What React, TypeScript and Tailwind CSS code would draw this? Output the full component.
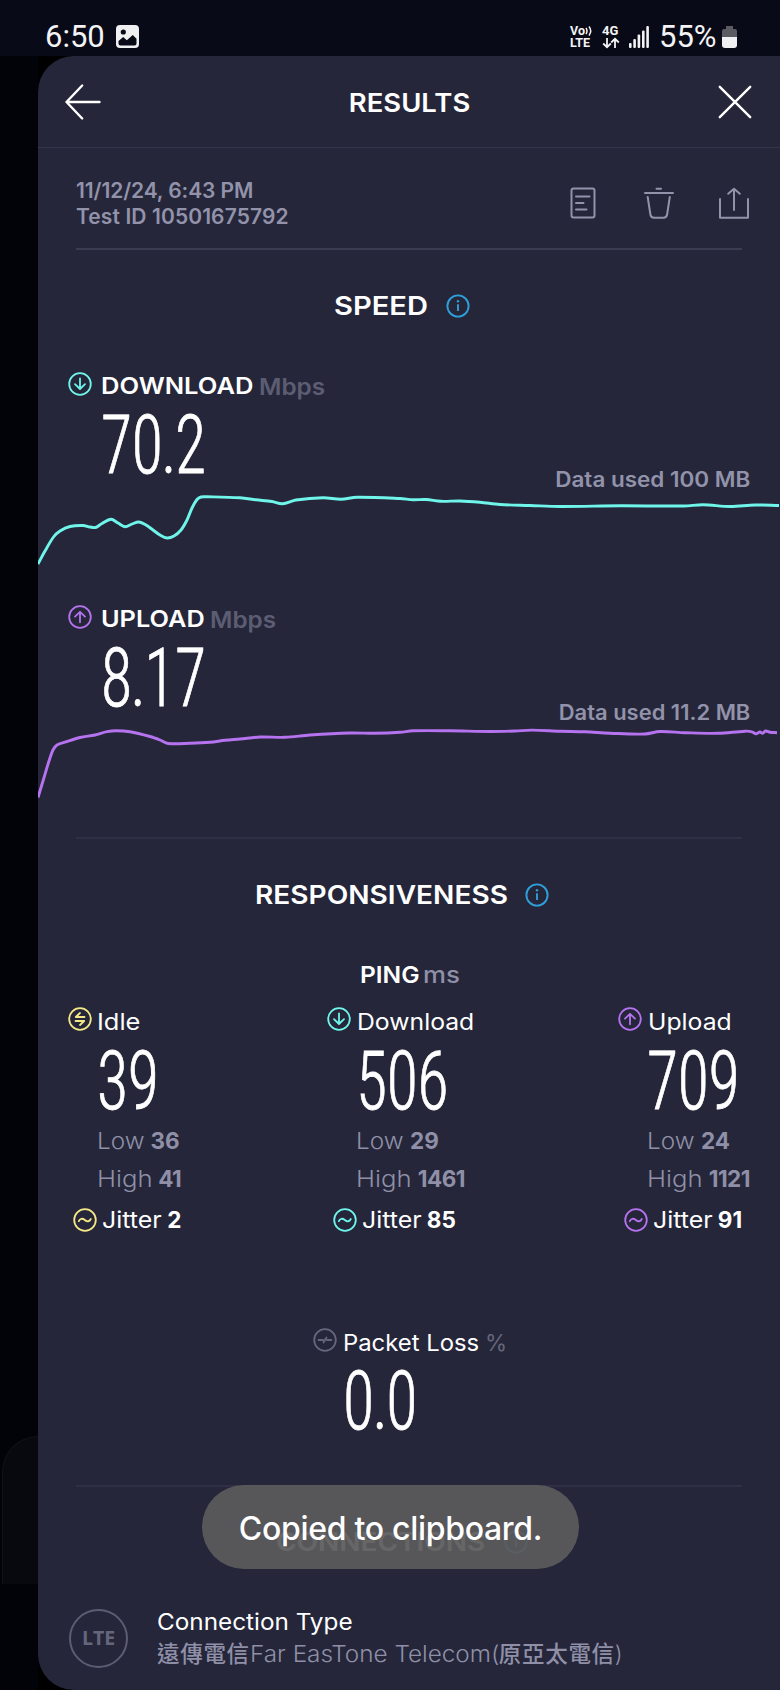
import type { ReactNode } from "react";

type Point = [number, number];
type Direction = "up" | "down";

type PingColumn = {
  label: ReactNode;
  value: string;
  low: string;
  high: string;
  jitter: string;
  color: string;
  icon: ReactNode;
};

const CYAN = "#6ff5ea";
const PURPLE = "#b673f0";
const YELLOW = "#f4e886";

const DOWNLOAD_POINTS: Point[] = [
  [38, 564], [45, 551], [53.5, 537], [60, 531], [70, 526.5], [83, 525.5], [90, 527], [95.5, 527.5],
  [102, 523.5], [111, 519.3], [118, 523], [125, 526.7], [132, 524], [139, 522], [146, 525], [153, 530],
  [160, 535], [167, 538], [174, 536], [181, 530], [187, 520], [192, 508], [197, 499.5], [201, 497],
  [207, 496.8], [240, 497.8], [256, 499.8], [272, 501.5], [282.5, 503.7], [296, 500], [323, 497.7],
  [341, 499.2], [357, 497.3], [400, 498.5], [413, 499.7], [426, 499.5], [441, 501.3], [460, 501],
  [480, 502.3], [500, 504.5], [530, 505.5], [560, 506.5], [620, 505.8], [684, 506], [703, 504.7],
  [730, 506.5], [755, 505], [779, 505.5],
];

const UPLOAD_POINTS: Point[] = [
  [38, 797.5], [43, 781], [49, 761], [53, 750], [57, 745], [66, 741.8], [80, 737.5], [95, 735],
  [107, 731.7], [116, 730.7], [130, 731.7], [150, 736.5], [160, 740], [168, 743.5], [190, 743.3],
  [210, 742.3], [225, 740.3], [240, 739], [260, 737], [285, 737.3], [310, 735], [350, 733],
  [375, 733.3], [400, 732.3], [413, 730.8], [450, 730.8], [490, 731.5], [515, 731], [532, 730.1],
  [560, 731.2], [585, 731.8], [610, 733.2], [645, 734], [660, 731.5], [685, 732.7], [718, 733.3],
  [745, 731.2], [752, 731.8], [756, 733.8], [760, 731.9], [762.5, 733.3], [765.5, 731],
  [770, 732.2], [777, 732.7],
];

// Catmull-Rom to bezier
function smoothPath(pts: Point[]): string {
  let d = `M${pts[0][0]} ${pts[0][1]}`;
  for (let i = 0; i < pts.length - 1; i++) {
    const p0 = pts[i - 1] ?? pts[i];
    const p1 = pts[i];
    const p2 = pts[i + 1];
    const p3 = pts[i + 2] ?? p2;
    const dx = (p2[0] - p1[0]) / 3;
    const m1 = (p2[1] - p0[1]) / (p2[0] - p0[0]);
    const m2 = (p3[1] - p1[1]) / (p3[0] - p1[0]);
    d += `C${p1[0] + dx} ${p1[1] + m1 * dx} ${p2[0] - dx} ${p2[1] - m2 * dx} ${p2[0]} ${p2[1]}`;
  }
  return d;
}

function CircleIcon({ color, children, className = "" }: { color: string; children: ReactNode; className?: string }) {
  return (
    <svg
      viewBox="0 0 24 24"
      className={`size-6 shrink-0 ${className}`}
      fill="none"
      stroke={color}
      strokeWidth="1.8"
      strokeLinecap="round"
      strokeLinejoin="round"
    >
      <circle cx="12" cy="12" r="10.8" />
      {children}
    </svg>
  );
}

function ArrowIcon({ dir, color, className }: { dir: Direction; color: string; className?: string }) {
  return (
    <CircleIcon color={color} className={className}>
      <path d={dir === "down" ? "M12 6.5v10.3M7 12.2l5 4.8 5-4.8" : "M12 17.3V7M7 11.6l5-4.8 5 4.8"} />
    </CircleIcon>
  );
}

function IdleIcon({ className }: { className?: string }) {
  return (
    <CircleIcon color={YELLOW} className={className}>
      <path d="M16.5 10H7.8l4.200-4M7.500 14h8.700l-4.200 4" />
    </CircleIcon>
  );
}

function JitterIcon({ color }: { color: string }) {
  return (
    <CircleIcon color={color}>
      <path d="M5.8 13.2c1.200-2.800 3.600-3.200 6-1.200s4.600 1.700 6-1" />
    </CircleIcon>
  );
}

function InfoIcon() {
  return (
    <svg viewBox="0 0 24 24" className="size-6 shrink-0" fill="none" stroke="#2f9fd9" strokeWidth="1.9">
      <circle cx="12" cy="12" r="10.6" />
      <path d="M12 10.2v6.8" />
      <circle cx="12" cy="7.3" r="1.2" fill="#2f9fd9" stroke="none" />
    </svg>
  );
}

// Widened text; the caller adds the margin that the scale takes up
function Wide({ children, className = "" }: { children: ReactNode; className?: string }) {
  return <span className={`inline-block origin-left whitespace-nowrap ${className}`}>{children}</span>;
}

function BigNumber({ children }: { children: string }) {
  const [whole, fraction] = children.split(".");
  return (
    <span className="inline-block origin-left scale-x-[0.78] font-['Roboto_Condensed','Roboto',sans-serif] text-[82px] leading-[86px] font-light tracking-[-0.5px] [-webkit-text-stroke:0.8px_#fff]">
      {whole}
      {fraction && <span className="-mx-[1.5px]">.</span>}
      {fraction}
    </span>
  );
}

function Divider({ className = "" }: { className?: string }) {
  return <div className={`mr-[38px] ml-[38px] h-0.5 shrink-0 ${className}`} />;
}

function StatusBar() {
  return (
    <header className="flex h-14 shrink-0 items-center bg-[#090a17] pt-[17px] pr-[43px] pl-[45px] font-['Roboto',sans-serif] text-[31px] leading-none font-[430] text-[#f3f3f5]">
      <span className="w-[60px]">6:50</span>
      <svg viewBox="0 0 23 23" className="ml-[11px] size-[23px]">
        <rect width="23" height="23" rx="4" fill="#f0f0f2" />
        <circle cx="7.3" cy="7" r="2.6" fill="#090a17" />
        <path d="M2.5 18.5V16l4.700-4 3.600 3.300L16.800 10l3.700 3.700v4.800a2 2 0 0 1-2 2h-14a2 2 0 0 1-2-2Z" fill="#090a17" />
      </svg>
      <div className="ml-auto flex items-center">
        <div className="flex w-[24px] flex-col text-[12.5px] leading-[12px] font-bold">
          <span className="flex">
            Vo
            <svg viewBox="0 0 8 12" className="h-3 w-2" fill="none" stroke="#f3f3f5" strokeWidth="1.5">
              <path d="M1 3q2 3 0 6M4 1.500q3.500 4.500 0 9" />
            </svg>
          </span>
          <span>LTE</span>
        </div>
        <div className="ml-[8px] flex w-[18px] flex-col text-[13px] leading-[12px] font-bold">
          <span>4G</span>
          <svg viewBox="0 0 18 12" className="h-3 w-[18px]" fill="none" stroke="#f3f3f5" strokeWidth="1.8">
            <path d="M5 1v9M1.200 6.500 5 10.200l3.800-3.700M13 11V2M9.200 5.500 13 1.800l3.800 3.700" />
          </svg>
        </div>
        <svg viewBox="0 0 20 22" className="ml-[9px] h-[22px] w-[20px]" fill="#f3f3f5">
          <rect x="0" y="17" width="2.6" height="5" rx="1" />
          <rect x="4.3" y="13" width="2.6" height="9" rx="1" />
          <rect x="8.6" y="8.5" width="2.6" height="13.5" rx="1" />
          <rect x="13" y="4.5" width="2.6" height="17.5" rx="1" />
          <rect x="17.3" y="0" width="2.6" height="22" rx="1" />
        </svg>
        <span className="ml-[10px] w-[58px]">55%</span>
        <svg viewBox="0 0 15 22" className="ml-[5px] h-[22px] w-[15px]">
          <path d="M4 0h7v3h2a2 2 0 0 1 2 2v6H0V5a2 2 0 0 1 2-2h2Z" fill="#5b5b64" />
          <path d="M0 11h15v8a3 3 0 0 1-3 3H3a3 3 0 0 1-3-3Z" fill="#f0f0f2" />
        </svg>
      </div>
    </header>
  );
}

function SectionTitle({ children, className = "" }: { children: ReactNode; className?: string }) {
  return (
    <div className={`flex h-[30px] shrink-0 items-center justify-center gap-[18px] pr-[14px] text-[26px] leading-[30px] font-semibold ${className}`}>
      {children}
      <InfoIcon />
    </div>
  );
}

function SpeedBlock({
  label, value, used, color, points, top,
}: {
  label: ReactNode;
  value: string;
  used: ReactNode;
  color: string;
  points: Point[];
  top: number;
}) {
  return (
    <div className="h-[233px] shrink-0">
      <div className="flex h-8 items-center pl-[29.5px] text-[23px] leading-[33px] font-semibold">
        <ArrowIcon dir={color === CYAN ? "down" : "up"} color={color} className="mr-[9px] mb-[5px]" />
        {label}
        <Wide className="ml-[6px] scale-x-[1.08] text-[22.5px] font-[580] text-[#5c5d73]">Mbps</Wide>
      </div>
      <div className="flex h-[92px] justify-between pr-[30px] pl-[63px]">
        <BigNumber>{value}</BigNumber>
        <div className="self-end text-[21px] leading-[29px] font-[580] text-[#9293aa]">{used}</div>
      </div>
      <svg viewBox={`38 ${top} 742 76`} className="h-[76px] w-[742px]" fill="none" stroke={color} strokeWidth="2.9">
        <path d={smoothPath(points)} />
      </svg>
    </div>
  );
}

function PingStats({ col }: { col: PingColumn }) {
  return (
    <div className="text-[22.5px]">
      <div className="flex h-8 items-center gap-[5.5px] leading-8">
        {col.icon}
        {col.label}
      </div>
      <div className="h-[84px] pl-[29px]">
        <BigNumber>{col.value}</BigNumber>
      </div>
      <div className="pl-[29px] leading-[37.5px] text-[#8f90a7]">
        <p>
          <Wide className="mr-[3.5px] scale-x-[1.08] font-[330]">Low</Wide>
          <b className="ml-[6.5px]">{col.low}</b>
        </p>
        <p>
          <Wide className="mr-[7px] scale-x-[1.14] font-[330]">High</Wide>
          <b className="ml-[6px] tracking-[-0.5px]">{col.high}</b>
        </p>
      </div>
      <div className="mt-[7px] flex h-8 items-center pl-[5.5px] leading-8">
        <JitterIcon color={col.color} />
        <Wide className="mr-[6px] ml-[5px] scale-x-[1.11]">Jitter</Wide>
        <b className="ml-[5.5px]">{col.jitter}</b>
      </div>
    </div>
  );
}

const PING: PingColumn[] = [
  {
    label: <Wide className="scale-x-[1.13]">Idle</Wide>,
    value: "39", low: "36", high: "41", jitter: "2",
    color: YELLOW,
    icon: <IdleIcon className="mb-[6px]" />,
  },
  {
    label: <Wide className="scale-x-[1.1]">Download</Wide>,
    value: "506", low: "29", high: "1461", jitter: "85",
    color: CYAN,
    icon: <ArrowIcon dir="down" color={CYAN} className="mb-[6px]" />,
  },
  {
    label: <Wide className="scale-x-[1.1]">Upload</Wide>,
    value: "709", low: "24", high: "1121", jitter: "91",
    color: PURPLE,
    icon: <ArrowIcon dir="up" color={PURPLE} className="mb-[6px]" />,
  },
];

export default function App() {
  return (
    <div className="relative flex h-[1690px] w-[780px] flex-col overflow-hidden bg-black font-['Inter','Noto_Sans_CJK_TC',sans-serif] text-white">
      <StatusBar />
      <div className="flex flex-1">
        <aside className="flex w-[38px] shrink-0 flex-col bg-[#020308] pt-[1380px] pl-[2px]">
          <div className="h-[148px] rounded-tl-[36px] border-t border-l border-[#111218] bg-[#08090e]" />
        </aside>

        <main className="flex h-[1634px] w-[742px] flex-col overflow-hidden rounded-l-[36px] bg-[#25263a]">
          <div className="flex h-[92px] shrink-0 items-center justify-between border-b border-[#34354a] pr-[28px] pl-[26px]">
            <svg viewBox="0 0 38 38" className="size-[38px]" fill="none" stroke="#fff" strokeWidth="2.4" strokeLinecap="round" strokeLinejoin="round">
              <path d="M35.500 19H2.500M18.200 2.500 2.500 19l15.700 16.500" />
            </svg>
            <h1 className="scale-x-[1.055] pt-[2px] text-[26px] leading-[30px] font-semibold">RESULTS</h1>
            <svg viewBox="0 0 34 34" className="size-[34px]" fill="none" stroke="#fff" strokeWidth="2.4" strokeLinecap="round">
              <path d="m1.800 1.800 30.400 30.400M32.200 1.800 1.800 32.200" />
            </svg>
          </div>

          <div className="mt-[30px] flex shrink-0 items-center justify-between pr-[30px] pl-[38px] text-[#9293aa]">
            <div className="text-[21px] leading-[25.5px] font-[580]">
              <p className="tracking-[-0.1px]">11/12/24, 6:43 PM</p>
              <p className="tracking-[0.1px]">Test ID 10501675792</p>
            </div>
            <div className="mb-[2px] flex items-center">
              <svg viewBox="0 0 26 32" className="mr-[47px] h-[32px] w-[26px]" fill="none" stroke="#9293aa" strokeWidth="2" strokeLinecap="round">
                <rect x="1.5" y="1.5" width="23" height="29" rx="2" />
                <path d="M6 9.500h13.500M6 16h7.500M6 22.500h10.500" />
              </svg>
              <svg viewBox="0 0 32 32" className="mr-[43.5px] size-[32px]" fill="none" stroke="#9293aa" strokeWidth="2" strokeLinecap="round">
                <path d="M13.500 1.800h4.500M2 6h28M4.700 10l2.700 17.500q.5 3.200 3.600 3.200h9.500q3.100 0 3.600-3.200L26.800 10" />
              </svg>
              <svg viewBox="0 0 32 32" className="size-[32px]" fill="none" stroke="#9293aa" strokeWidth="2" strokeLinecap="round" strokeLinejoin="round">
                <path d="M2 12v18.700h28V12M16 23V2M10.200 6.800 16 1.800l5.800 5" />
              </svg>
            </div>
          </div>
          <Divider className="mt-[19px] bg-[#3b3c52]" />

          <SectionTitle className="mt-[41px]">
            <Wide className="mr-[10px] scale-x-[1.12]">SPEED</Wide>
          </SectionTitle>
          <div className="mt-[49px]">
            <SpeedBlock
              label={<Wide className="mr-[15px] scale-x-[1.11]">DOWNLOAD</Wide>}
              value="70.2"
              used={<Wide className="origin-right scale-x-[1.07]">Data used 100 MB</Wide>}
              color={CYAN}
              points={DOWNLOAD_POINTS}
              top={494}
            />
            <SpeedBlock
              label={<Wide className="mr-[9.5px] scale-x-[1.1]">UPLOAD</Wide>}
              value="8.17"
              used={<Wide className="origin-right scale-x-[1.045]">Data used 11.2 MB</Wide>}
              color={PURPLE}
              points={UPLOAD_POINTS}
              top={727}
            />
          </div>
          <Divider className="mt-[1px] bg-[#2f3045]" />

          <SectionTitle className="mt-[41px]">
            <Wide className="mr-[18px] scale-x-[1.08]">RESPONSIVENESS</Wide>
          </SectionTitle>
          <p className="mt-[50px] h-[30px] shrink-0 text-center text-[22.5px] leading-[30px]">
            <Wide className="mr-[5px] scale-x-[1.09] font-semibold">PING</Wide>
            <Wide className="mr-[3px] ml-[4px] scale-x-[1.15] font-medium text-[#8f90a7]">ms</Wide>
          </p>
          <div className="mt-[16px] grid shrink-0 grid-cols-[259.5px_291px_1fr] pl-[29.5px]">
            {PING.map((col) => (
              <PingStats key={col.value} col={col} />
            ))}
          </div>

          <div className="mt-[90px] shrink-0 pl-[275px] text-[22.5px]">
            <div className="flex h-8 items-center leading-[33px]">
              <CircleIcon color="#65667b" className="mb-[5px]">
                <path d="M5.500 12h4.500M14 12h4.500M10.500 14.500 13.500 9.500" />
              </CircleIcon>
              <Wide className="mr-[8px] ml-[5.5px] scale-x-[1.06]">Packet Loss</Wide>
              <span className="ml-[6px] text-[#65667b]">%</span>
            </div>
            <div className="h-[85px] pl-[30px]">
              <BigNumber>0.0</BigNumber>
            </div>
          </div>
          <Divider className="mt-[42px] bg-[#2f3045]" />

          <SectionTitle className="mt-[40px]">
            <Wide className="mr-[15px] scale-x-[1.075]">CONNECTIONS</Wide>
          </SectionTitle>

          <div className="mt-[49px] flex shrink-0 items-center gap-[29px] pl-[31px]">
            <div className="flex size-[59px] items-center justify-center rounded-full border-2 border-[#5c5d73] font-['Open_Sans',sans-serif] text-[19.5px] font-bold text-[#65667b]">
              LTE
            </div>
            <div className="text-[22.5px] leading-8">
              <p>
                <Wide className="scale-x-[1.08]">Connection Type</Wide>
              </p>
              <p className="whitespace-nowrap text-[#8f90a7]">
                <span className="font-medium tracking-[0.7px]">遠傳電信</span>
                <Wide className="mr-[18px] scale-x-[1.08] font-[330]">Far EasTone Telecom(</Wide>
                <span className="font-medium tracking-[0.7px]">原亞太電信</span>
                <span className="font-light">)</span>
              </p>
            </div>
          </div>
        </main>
      </div>

      <div className="absolute top-[1485px] left-[202px] flex h-[84px] w-[377px] items-center justify-center rounded-full bg-[#5b5a5b]/93 pt-[3px] text-[32px] font-[450] tracking-[-0.3px]">
        Copied to clipboard.
      </div>
    </div>
  );
}
